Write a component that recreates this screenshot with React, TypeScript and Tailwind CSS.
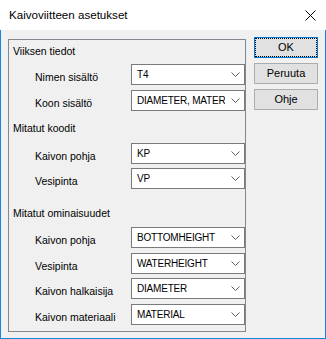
import {useState} from 'react';

const font = {fontFamily: '"Liberation Sans", Arial, sans-serif'};

function Chevron() {
  return (
    <svg width="9" height="5" viewBox="0 0 9 5" className="shrink-0">
      <path d="M0.5 0.5 L4.5 4.5 L8.5 0.5" fill="none" stroke="#606060" strokeWidth="1" />
    </svg>
  );
}

function Combo({value}: {value: string}) {
  return (
    <div className="flex h-[21px] w-[114px] shrink-0 items-center border border-[#7a7a7a] bg-white">
      <div className="w-[93px] overflow-hidden whitespace-nowrap pl-[5px] text-[10px] leading-[13px] tracking-[-0.2px] -mt-[1px]">
        {value}
      </div>
      <div className="flex flex-1 justify-center pl-[2px]">
        <Chevron />
      </div>
    </div>
  );
}

function Row({label, value, mt}: {label: string; value: string; mt: string}) {
  return (
    <div className={`flex items-start ${mt}`}>
      <div className="mt-[7px] w-[118px] shrink-0 pl-[22px] leading-[13px]">{label}</div>
      <Combo value={value} />
    </div>
  );
}

function Button({label, focused}: {label: string; focused?: boolean}) {
  return (
    <button
      className={`flex h-[21px] w-[64px] items-center justify-center bg-[#e1e1e1] text-[11px] leading-[13px] ${
        focused ? 'border border-[#0078d7]' : 'border border-[#adadad]'
      }`}
    >
      {focused ? (
        <span className="flex h-full w-full items-center justify-center border border-dotted border-black">
          {label}
        </span>
      ) : (
        label
      )}
    </button>
  );
}

export default function App() {
  const [open] = useState(true);
  if (!open) return null;

  return (
    <div className="flex h-[339px] w-[326px] flex-col text-[10.5px] text-black" style={font}>
      <div className="flex h-[30px] shrink-0 items-center justify-between bg-white pl-[9px] pr-[10px]">
        <span className="text-[11.6px]">Kaivoviitteen asetukset</span>
        <svg width="11" height="11" viewBox="0 0 11 11">
          <path d="M0.5 0.5 L10.5 10.5 M10.5 0.5 L0.5 10.5" stroke="#000" strokeWidth="1" />
        </svg>
      </div>
      <div className="flex flex-1 items-start border-x border-b border-[#1883d7] bg-[#f0f0f0] pl-[7px] pt-[9px]">
        <div className="flex h-[293px] w-[238px] flex-col border border-[#828790] pl-[4px]">
          <div className="mt-[5px] leading-[13px]">Viiksen tiedot</div>
          <Row label="Nimen sisältö" value="T4" mt="mt-[6px]" />
          <Row label="Koon sisältö" value="DIAMETER, MATERIAL" mt="mt-[5px]" />

          <div className="mt-[11px] leading-[13px]">Mitatut koodit</div>
          <Row label="Kaivon pohja" value="KP" mt="mt-[8px]" />
          <Row label="Vesipinta" value="VP" mt="mt-[4px]" />

          <div className="mt-[18px] leading-[13px]">Mitatut ominaisuudet</div>
          <Row label="Kaivon pohja" value="BOTTOMHEIGHT" mt="mt-[7px]" />
          <Row label="Vesipinta" value="WATERHEIGHT" mt="mt-[5px]" />
          <Row label="Kaivon halkaisija" value="DIAMETER" mt="mt-[4px]" />
          <Row label="Kaivon materiaali" value="MATERIAL" mt="mt-[5px]" />
        </div>
        <div className="-mt-[2px] ml-[8px] flex flex-col gap-[5px]">
          <Button label="OK" focused />
          <Button label="Peruuta" />
          <Button label="Ohje" />
        </div>
      </div>
    </div>
  );
}
